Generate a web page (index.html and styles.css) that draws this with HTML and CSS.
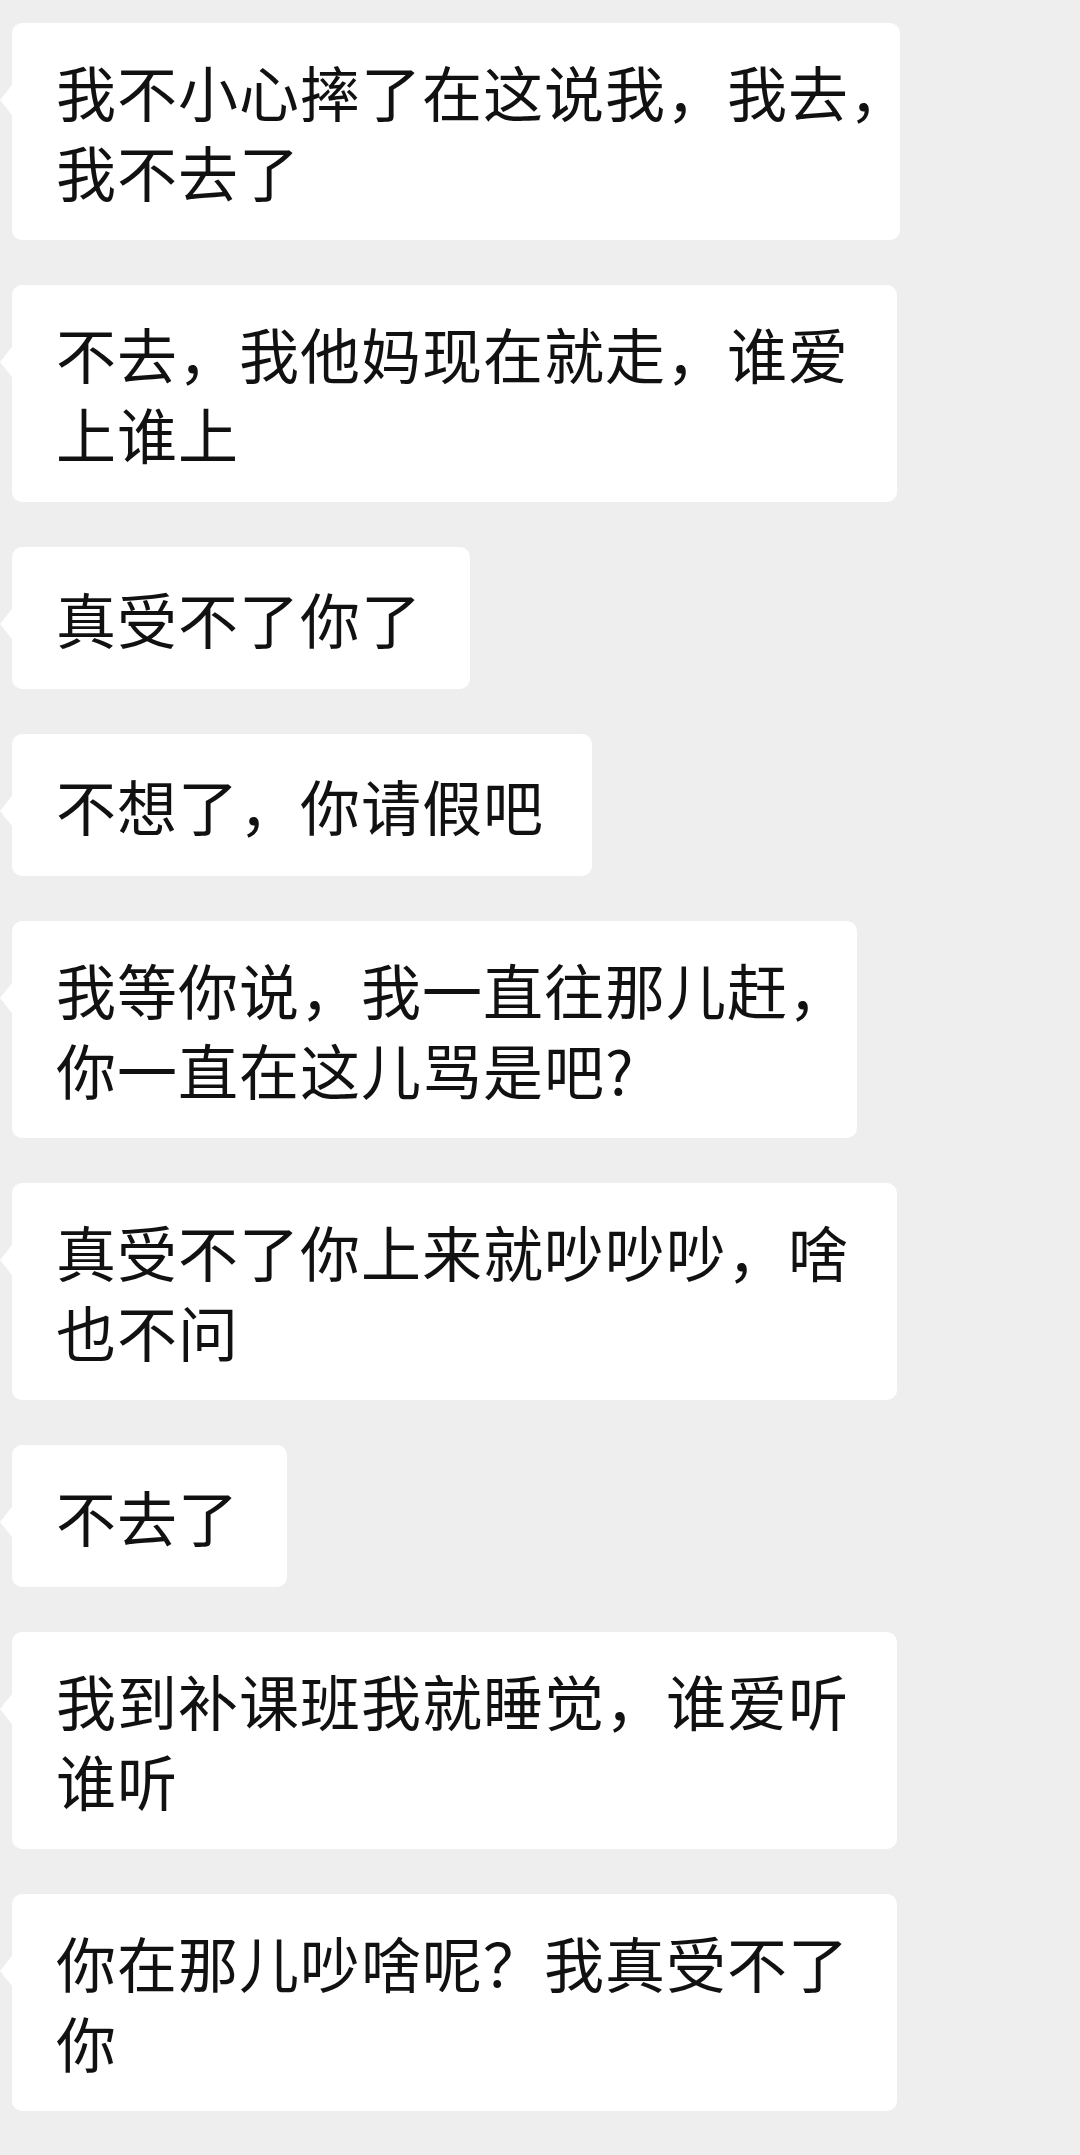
FILE: index.html
```html
<!DOCTYPE html>
<html lang="zh-CN">
<head>
<meta charset="utf-8">
<title>聊天记录</title>
<link rel="stylesheet" href="styles.css">
</head>
<body>
<div class="chat">
  <div class="bubble"><p class="text">我不小心摔了在这说我，我去<span class="trail">，</span><br>我不去了</p></div>
  <div class="bubble"><p class="text">不去，我他妈现在就走，谁爱<br>上谁上</p></div>
  <div class="bubble"><p class="text">真受不了你了</p></div>
  <div class="bubble"><p class="text">不想了，你请假吧</p></div>
  <div class="bubble"><p class="text">我等你说，我一直往那儿赶<span class="trail">，</span><br>你一直在这儿骂是吧?</p></div>
  <div class="bubble"><p class="text">真受不了你上来就吵吵吵，啥<br>也不问</p></div>
  <div class="bubble"><p class="text">不去了</p></div>
  <div class="bubble"><p class="text">我到补课班我就睡觉，谁爱听<br>谁听</p></div>
  <div class="bubble"><p class="text">你在那儿吵啥呢？我真受不了<br>你</p></div>
</div>
</body>
</html>
```
FILE: styles.css
```css
html, body {
  margin: 0;
  padding: 0;
  background: #eeeeee;
}

body {
  width: 1080px;
  min-height: 2155px;
  font-family: "Noto Sans CJK SC", "Noto Sans", sans-serif;
  color: #111111;
}

.chat {
  display: flex;
  flex-direction: column;
  align-items: flex-start;
  gap: 45px;
  padding: 23px 0 0 12px;
}

.bubble {
  position: relative;
  box-sizing: border-box;
  max-width: 888px;
  min-height: 142px;
  padding: 28px 48px 29px 44px;
  background: #ffffff;
  border-radius: 10px;
  display: flex;
  flex-direction: column;
  justify-content: center;
}

.bubble::before {
  content: "";
  position: absolute;
  left: -12px;
  top: 62px;
  width: 0;
  height: 0;
  border-top: 15px solid transparent;
  border-bottom: 15px solid transparent;
  border-right: 12px solid #ffffff;
}

.text {
  margin: 0;
  font-size: 60px;
  line-height: 80px;
  letter-spacing: 1px;
  white-space: nowrap;
}

.trail {
  margin-right: -40px;
}
```
